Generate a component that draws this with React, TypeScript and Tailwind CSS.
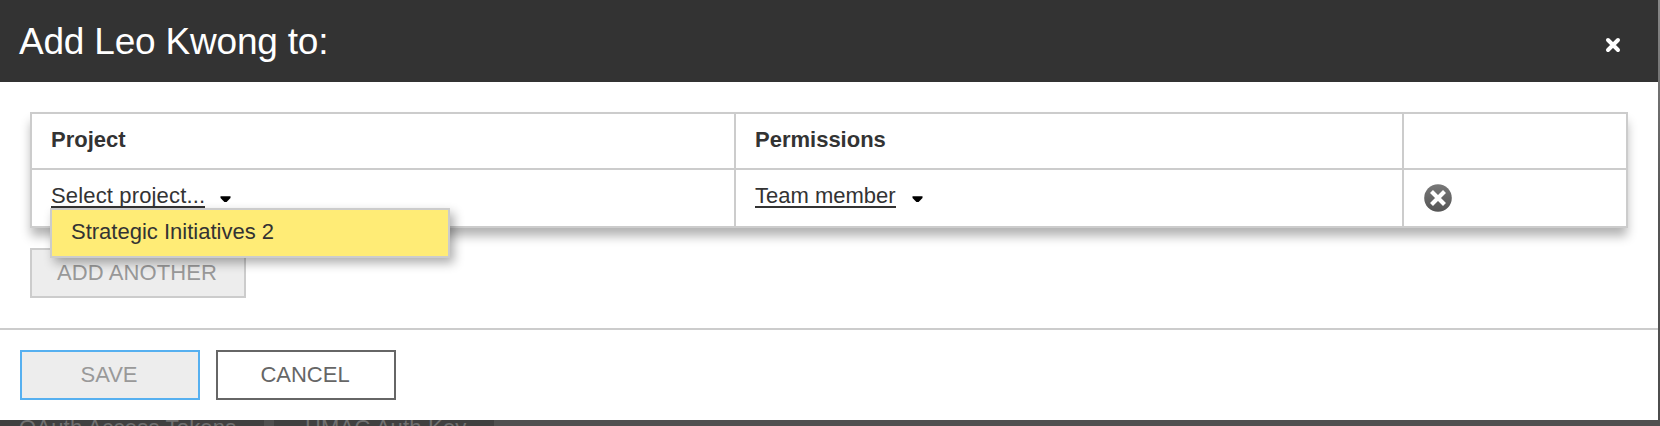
import React from "react";

function Caret() {
  return (
    <svg width="11" height="7" viewBox="0 0 11 7" className="block">
      <path d="M0.5 0.3h10v1.6L6.6 6H4.4L0.5 1.9z" fill="#000" />
    </svg>
  );
}

function Header() {
  return (
    <header className="flex h-[82px] items-start justify-between bg-[#333] pl-[19px] pr-[37px]">
      <h1 className="pt-[19px] text-[37px] leading-[46px] tracking-[-0.2px] text-white">Add Leo Kwong to:</h1>
      <button className="mt-[37px] block" aria-label="Close">
        <svg width="16" height="16" viewBox="0 0 16 16" className="block">
          <path d="M3 3l10 10M13 3L3 13" stroke="#fff" strokeWidth="4" strokeLinecap="round" />
        </svg>
      </button>
    </header>
  );
}

function ProjectTable() {
  return (
    <div className="grid h-[116px] grid-cols-[702px_666px_222px] grid-rows-[54px_56px] gap-[2px] border-2 border-[#ccc] bg-[#ccc] text-[22px] leading-[26px] text-[#333] shadow-[0_9px_10px_-1px_rgba(0,0,0,0.3)]">
      <div className="bg-white pl-[19px] pt-[13px] font-bold"><span>Project</span></div>
      <div className="bg-white pl-[19px] pt-[13px] font-bold"><span>Permissions</span></div>
      <div className="bg-white" />
      <div className="relative flex items-start bg-white pl-[19px] pt-[13px]">
        <span className="h-[25px] border-b-2 border-[#333] tracking-[0.15px]">Select project...</span>
        <span className="ml-[15px] mt-[13px]"><Caret /></span>
        <div className="absolute left-[18px] top-[38px] z-10 h-[50px] w-[400px] border-2 border-[#ccc] bg-[#ffec76] pl-[19px] pt-[9px] shadow-[4px_5px_10px_rgba(0,0,0,0.32)]">
          <span>Strategic Initiatives 2</span>
        </div>
      </div>
      <div className="flex items-start bg-white pl-[19px] pt-[13px]">
        <span className="h-[25px] border-b-2 border-[#333]">Team member</span>
        <span className="ml-[16px] mt-[13px]"><Caret /></span>
      </div>
      <div className="bg-white pl-[20px] pt-[14px]">
        <svg width="28" height="28" viewBox="0 0 28 28" className="block">
          <defs>
            <linearGradient id="disc" x1="0" y1="0" x2="0" y2="1">
              <stop offset="0" stopColor="#787878" />
              <stop offset="1" stopColor="#555" />
            </linearGradient>
          </defs>
          <circle cx="14" cy="14" r="13.8" fill="url(#disc)" />
          <path d="M7.5 7.5l13 13M20.5 7.5l-13 13" stroke="#fff" strokeWidth="4.2" />
        </svg>
      </div>
    </div>
  );
}

export default function App() {
  return (
    <div className="flex h-[426px] w-[1660px] flex-col overflow-hidden bg-[#505050] font-['Liberation_Sans',Arial,sans-serif]">
      <div className="flex">
        <main className="h-[420px] w-[1658px] shrink-0 bg-white">
          <Header />
          <section className="h-[246px] px-[30px] pt-[30px]">
            <ProjectTable />
            <button className="mt-[20px] block h-[50px] w-[216px] border-2 border-[#ccc] bg-[#ededed] pr-[2px] text-[22px] leading-[44px] tracking-[0.1px] text-[#999]">
              <span>ADD ANOTHER</span>
            </button>
          </section>
          <footer className="flex gap-[16px] border-t-2 border-[#ccc] px-[20px] pt-[20px] text-[22px] leading-[44px]">
            <button className="h-[50px] w-[180px] border-2 border-[#56b0f0] bg-[#ededed] pr-[2px] text-[#999]"><span>SAVE</span></button>
            <button className="h-[50px] w-[180px] border-2 border-[#666] bg-white pr-[2px] text-[#666]"><span>CANCEL</span></button>
          </footer>
        </main>
        <div className="h-[420px] w-[2px] bg-gradient-to-b from-[#888] via-[#555] to-[#4c4c4c]" />
      </div>
      <div className="flex h-[6px] overflow-hidden text-[22px] leading-[15px] tracking-[0.2px] text-[#707070]">
        <div className="h-[24px] w-[264px] shrink-0 bg-[#404040] pl-[19px]">OAuth Access Tokens</div>
        <div className="ml-[10px] h-[24px] w-[220px] shrink-0 bg-[#404040] pl-[31px]">HMAC Auth Key</div>
      </div>
    </div>
  );
}
